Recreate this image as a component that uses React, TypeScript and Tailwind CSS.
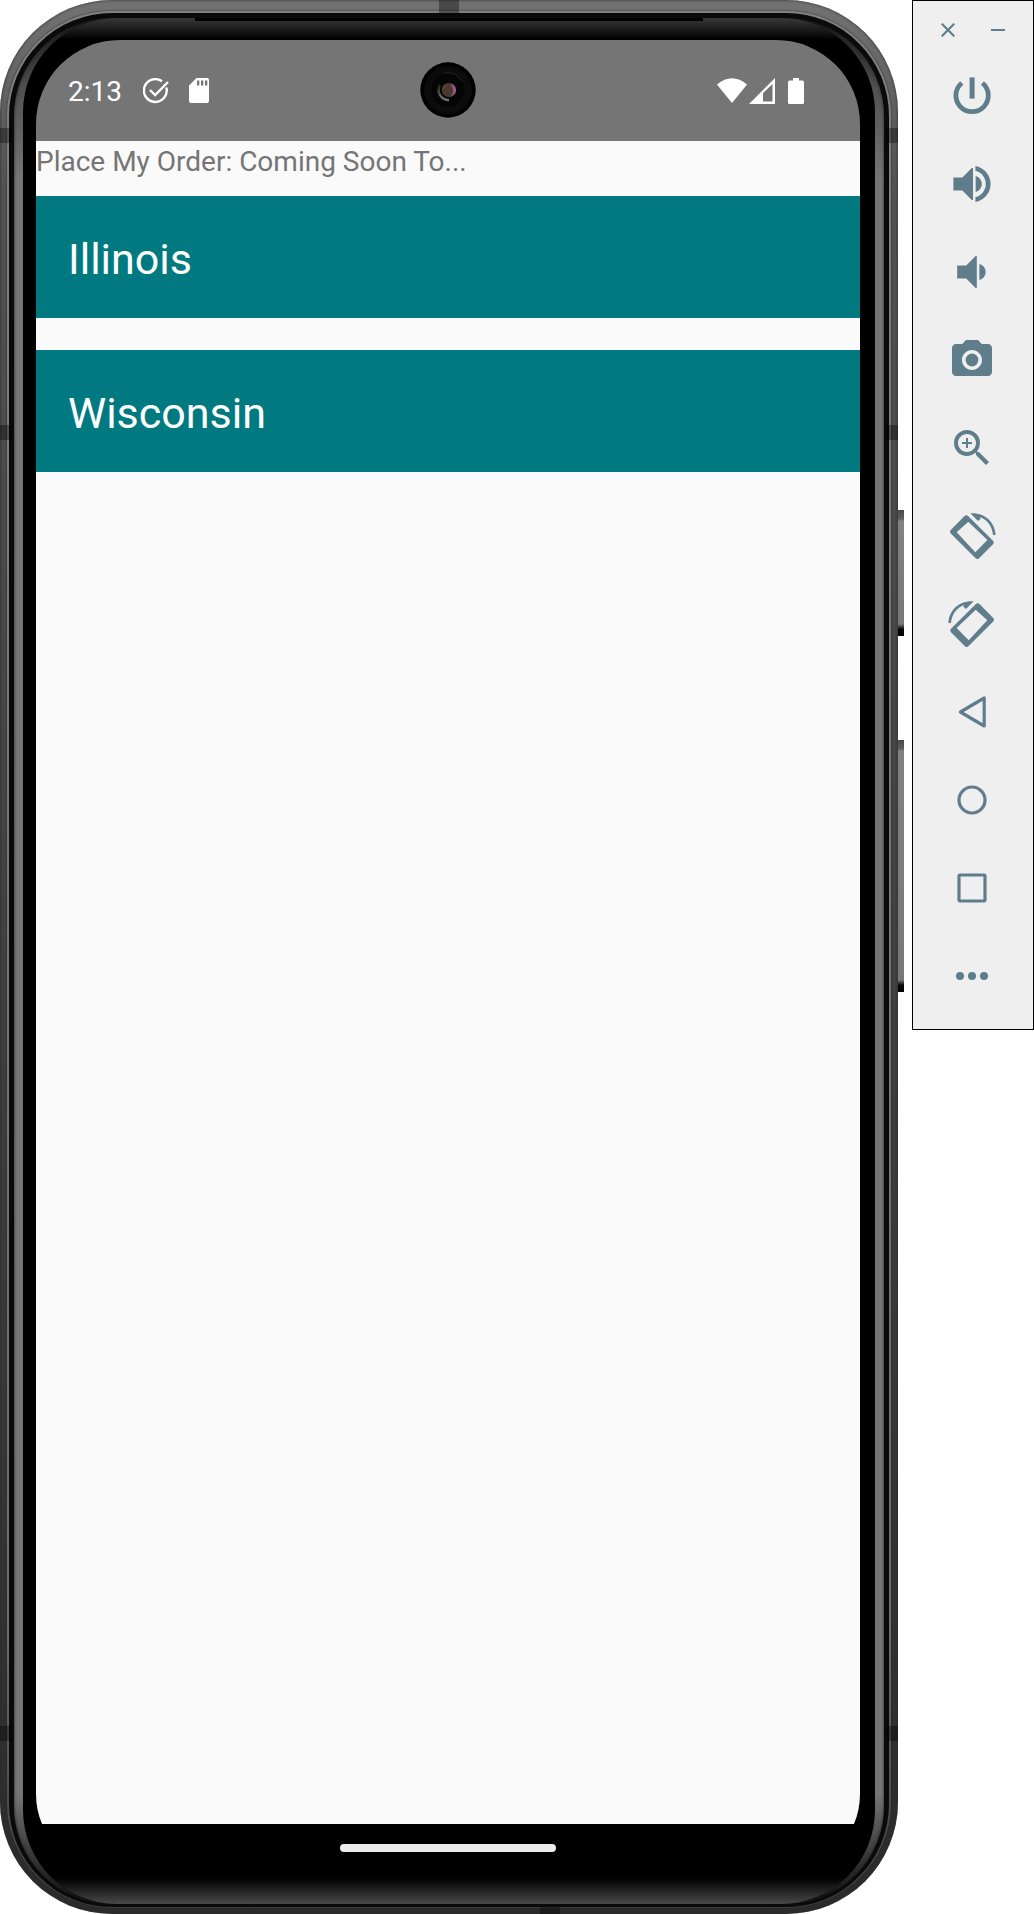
import type { ReactNode } from "react";

const states = ["Illinois", "Wisconsin"];

function Speaker({ x }: { x: number }) {
  return (
    <g transform={`translate(${x} 0)`}>
      <path d="M2.7 8.7v6.6h4.5l4.7 4.7h.6V4h-.6L7.2 8.7z" />
      <path d="M13.8 8c1.9.6 3.1 2.2 3.1 4s-1.2 3.4-3.1 4z" />
    </g>
  );
}

function RotateShape() {
  return (
    <>
      <path
        fillRule="evenodd"
        d="M181 589q6-6 12 0l74 73q5 6 0 11l-41 41q-6 6-12 0l-73-73q-6-6 0-12zM193 605l-35 32 56 60 36-37z"
      />
      <path d="M199 580c42-3 73 24 76 65h-8c-2-25-17-46-39-54l2 5-8 7z" />
    </>
  );
}

const tools: { label: string; icon: ReactNode; box?: string }[] = [
  {
    label: "Power",
    icon: (
      <>
        <path d="M10.8 2.7h2.5v10.6h-2.5z" />
        <path
          d="M6.9 5.5a8.1 8.1 0 1 0 10.3 0"
          fill="none"
          stroke="currentColor"
          strokeWidth="2.4"
        />
      </>
    ),
  },
  {
    label: "Volume up",
    icon: (
      <>
        <Speaker x={0} />
        <path d="M13.7 3c4.3.7 7.6 4.5 7.6 9s-3.3 8.3-7.6 9v-2.4c3-.7 5.2-3.4 5.2-6.6s-2.2-5.9-5.2-6.6z" />
      </>
    ),
  },
  { label: "Volume down", icon: <Speaker x={1.9} /> },
  {
    label: "Take screenshot",
    icon: (
      <>
        <circle cx="12" cy="12" r="3.2" />
        <path d="M9 2L7.17 4H4c-1.1 0-2 .9-2 2v12c0 1.1.9 2 2 2h16c1.1 0 2-.9 2-2V6c0-1.1-.9-2-2-2h-3.17L15 2H9zm3 15c-2.76 0-5-2.24-5-5s2.24-5 5-5 5 2.24 5 5-2.24 5-5 5z" />
      </>
    ),
  },
  {
    label: "Zoom",
    icon: (
      <>
        <path d="M15.5 14h-.79l-.28-.27A6.471 6.471 0 0 0 16 9.5 6.5 6.5 0 1 0 9.5 16c1.61 0 3.09-.59 4.23-1.57l.27.28v.79l5 4.99L20.49 19l-4.99-5zm-6 0C7.01 14 5 11.99 5 9.5S7.01 5 9.5 5 14 7.01 14 9.5 11.99 14 9.5 14z" />
        <path d="M12 10h-2v2H9v-2H7V9h2V7h1v2h2v1z" />
      </>
    ),
  },
  { label: "Rotate left", box: "132 576 144 144", icon: <RotateShape /> },
  {
    label: "Rotate right",
    box: "132 576 144 144",
    icon: (
      <g transform="translate(408 0) scale(-1 1)">
        <RotateShape />
      </g>
    ),
  },
  {
    label: "Back",
    icon: (
      <path
        d="M6.2 12l11.9-7v14z"
        fill="none"
        stroke="currentColor"
        strokeWidth="1.6"
        strokeLinejoin="round"
      />
    ),
  },
  {
    label: "Home",
    icon: <circle cx="12" cy="12" r="6.5" fill="none" stroke="currentColor" strokeWidth="1.6" />,
  },
  {
    label: "Overview",
    icon: (
      <rect x="5.5" y="5.5" width="13" height="13" rx=".6" fill="none" stroke="currentColor" strokeWidth="1.6" />
    ),
  },
  {
    label: "More",
    icon: (
      <>
        <circle cx="6" cy="12" r="2" />
        <circle cx="12" cy="12" r="2" />
        <circle cx="18" cy="12" r="2" />
      </>
    ),
  },
];

function CameraHole() {
  return (
    <svg
      viewBox="0 0 56 56"
      className="absolute left-1/2 top-[22px] size-14 -translate-x-1/2"
      aria-hidden="true"
    >
      <defs>
        <linearGradient id="lens" x1="0" y1="0" x2="1" y2="0">
          <stop offset="0" stopColor="#6b5512" />
          <stop offset="0.5" stopColor="#4a3434" />
          <stop offset="1" stopColor="#b565a8" />
        </linearGradient>
        <linearGradient id="glint" x1="0" y1="0" x2="0" y2="1">
          <stop offset="0" stopColor="#222" />
          <stop offset="1" stopColor="#777" />
        </linearGradient>
      </defs>
      <circle cx="28" cy="28" r="27.7" fill="#000" />
      <circle cx="28" cy="28" r="24" fill="#0b0b0b" />
      <circle cx="28" cy="28" r="17.5" fill="#050505" stroke="#101010" />
      <path d="M24 11a17 17 0 0 1 18 8" fill="none" stroke="#242424" />
      <path d="M20 23a10 10 0 0 0 9 15" fill="none" stroke="url(#glint)" strokeWidth="2.5" />
      <circle cx="28.500" cy="28" r="8.500" fill="#080606" />
      <circle cx="29" cy="28" r="7" fill="url(#lens)" />
      <circle cx="28" cy="29" r="5" fill="#4a3830" />
    </svg>
  );
}

function StatusBar() {
  return (
    <header className="relative flex h-[101px] shrink-0 items-center justify-between bg-[#757575] pl-8 pr-14 text-white">
      <div className="flex items-center">
        <time className="w-[75px] pt-[2px] text-[28px] leading-8">2:13</time>
        <svg viewBox="0 0 26 26" className="size-[26px]" aria-label="Task done">
          <path
            d="M23.3 9.5A11.4 11.4 0 1 1 19 3.3"
            fill="none"
            stroke="currentColor"
            strokeWidth="2.4"
          />
          <path d="M7 12l5.2 5L25 4" fill="none" stroke="currentColor" strokeWidth="2.4" />
        </svg>
        <svg viewBox="0 0 20 25" className="ml-5 h-[25px] w-5" aria-label="SD card">
          <path
            fill="currentColor"
            fillRule="evenodd"
            d="M7.5 0H18q2 0 2 2v21q0 2-2 2H2q-2 0-2-2V7.5zM8 2.5v5h2.3v-5zM12 2.5v5h2.3v-5zM16 2.5v5h2.3v-5z"
          />
        </svg>
      </div>
      <CameraHole />
      <div className="flex items-center">
        <svg viewBox="0 0 30 25" className="h-[25px] w-[30px]" aria-label="Wi-Fi">
          <path fill="currentColor" d="M0 6.5Q15-6 30 6.500L15 25z" />
        </svg>
        <svg viewBox="0 0 26 26" className="ml-[2px] size-[26px]" aria-label="Mobile signal">
          <path fill="currentColor" fillRule="evenodd" d="M0 26L26 0v26zM14 15v8.5h9.5V6z" />
        </svg>
        <svg viewBox="0 0 16 26" className="ml-[13px] h-[26px] w-4" aria-label="Battery">
          <path
            fill="currentColor"
            d="M5 0h6v2.5h3.5q1.5 0 1.5 1.5v20.5q0 1.5-1.5 1.5h-13Q0 26 0 24.5V4q0-1.5 1.5-1.5H5z"
          />
        </svg>
      </div>
    </header>
  );
}

function Screen() {
  return (
    <div className="flex flex-1 flex-col overflow-hidden rounded-b-[78px] rounded-t-[84px] bg-black">
      <StatusBar />
      <main className="flex-1 bg-[#fafafa]">
        <h1 className="h-[55px] pt-1 text-[28px] leading-[33px] text-[#757575]">
          Place My Order: Coming Soon To...
        </h1>
        <ul className="flex flex-col gap-8">
          {states.map((name) => (
            <li
              key={name}
              className="bg-[#007980] px-8 pb-8 pt-9 text-[43px] leading-[54px] text-white"
            >
              {name}
            </li>
          ))}
        </ul>
      </main>
      <div className="flex h-12 shrink-0 items-center justify-center">
        <div className="h-2 w-[216px] rounded-full bg-[#ececec]" />
      </div>
    </div>
  );
}

function AntennaBands() {
  return (
    <div aria-hidden="true">
      <div className="absolute left-0 top-[128px] h-[15px] w-3 bg-black/35" />
      <div className="absolute left-0 top-[425px] h-[15px] w-3 bg-black/35" />
      <div className="absolute bottom-[173px] left-0 h-[15px] w-3 bg-black/35" />
      <div className="absolute right-0 top-[128px] h-[15px] w-3 bg-black/35" />
      <div className="absolute right-0 top-[425px] h-[15px] w-3 bg-black/35" />
      <div className="absolute bottom-[173px] right-0 h-[15px] w-3 bg-black/35" />
      <div className="absolute left-1/2 top-0 h-[15px] w-5 -translate-x-1/2 bg-black/35" />
      <div className="absolute bottom-0 right-[338px] h-[7px] w-5 bg-black/35" />
      <div className="absolute inset-x-[195px] top-[18px] h-[3px] bg-black" />
    </div>
  );
}

function Phone() {
  return (
    <div className="relative flex min-h-screen flex-1 pr-[6px]">
      <div className="absolute right-0 top-[510px] h-[126px] w-[6px] bg-[linear-gradient(to_bottom,#484848_0px,#606060_9px,#828282_11px,#787878_calc(100%-12px),#0a0a0a_calc(100%-7px),#000000_100%)]" />
      <div className="absolute right-0 top-[740px] h-[252px] w-[6px] bg-[linear-gradient(to_bottom,#484848_0px,#606060_9px,#828282_11px,#787878_calc(100%-12px),#0a0a0a_calc(100%-7px),#000000_100%)]" />
      <div className="relative flex flex-1 rounded-[112px] bg-linear-to-b from-[#727272] via-[#525252] via-10% to-[#2c2c2c] px-[7px] pb-[6px] pt-[11px] shadow-[inset_0_0_3px_#2a2a2a]">
        <div className="flex flex-1 rounded-[105px] bg-linear-to-b from-[#808080] via-[#6e6e6e] via-85% to-[#3c3c3c] px-[2px] pb-px pt-[2px] shadow-[0_0_2px_#222222]">
          <div className="flex flex-1 rounded-[103px] bg-[#0a0a0a] pb-[3px] pl-[5px] pr-[5px] pt-[5px]">
            <div className="flex flex-1 rounded-[98px] bg-[linear-gradient(to_bottom,#111111_0px,#505050_70px,#757575_160px,#757575_calc(100%-110px),#3a3a3a_calc(100%-50px),#0a0a0a_100%)] px-[9px] shadow-[inset_0_0_3px_#222222]">
              <div className="flex flex-1 rounded-[94px] bg-[linear-gradient(to_bottom,#383838_0px,#000000_22px,#000000_calc(100%-26px),#484848_100%)] pb-8 pl-[13px] pr-[15px] pt-[22px]">
                <Screen />
              </div>
            </div>
          </div>
        </div>
        <AntennaBands />
      </div>
    </div>
  );
}

function Toolbar() {
  return (
    <aside className="flex w-[122px] shrink-0 flex-col border border-black bg-[#efefef] pb-[9px] pr-[2px] text-[#607d8b]">
      <div className="flex h-[51px] items-center justify-center gap-9 pl-[2px] pt-[7px]">
        <button type="button" aria-label="Close" className="size-[14px]">
          <svg viewBox="0 0 14 14" className="size-full" stroke="currentColor" strokeWidth="2.2">
            <path d="M.7.7l12.6 12.6M13.3.7L.7 13.3" />
          </svg>
        </button>
        <button type="button" aria-label="Minimize" className="size-[14px]">
          <svg viewBox="0 0 14 14" className="size-full" stroke="currentColor" strokeWidth="2">
            <path d="M0 7h14" />
          </svg>
        </button>
      </div>
      {tools.map(({ label, icon, box }) => (
        <button
          key={label}
          type="button"
          aria-label={label}
          className="flex h-[88px] items-center justify-center"
        >
          <svg viewBox={box ?? "0 0 24 24"} className="size-12" fill="currentColor">
            {icon}
          </svg>
        </button>
      ))}
    </aside>
  );
}

export default function App() {
  return (
    <div className="flex min-h-screen items-start gap-2 bg-white font-['Roboto',sans-serif]">
      <Phone />
      <Toolbar />
    </div>
  );
}
